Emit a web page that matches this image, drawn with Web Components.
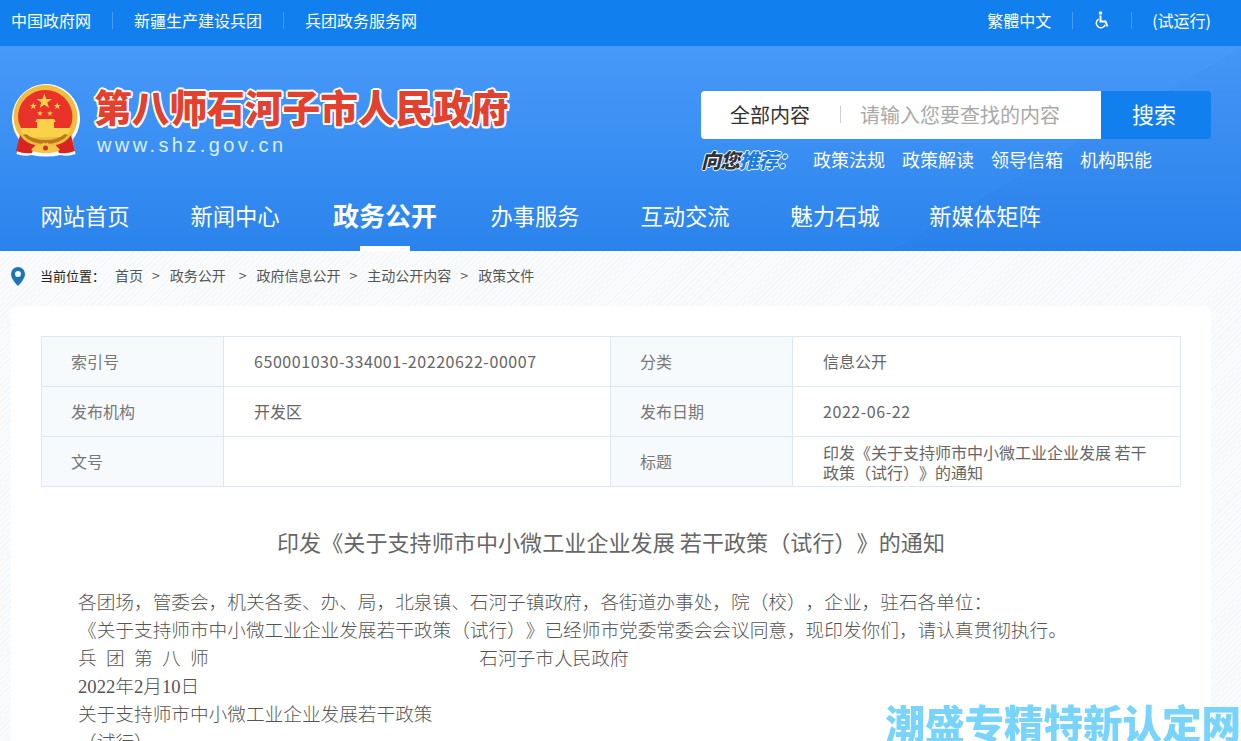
<!DOCTYPE html>
<html lang="zh-CN">
<head>
<meta charset="utf-8">
<title>第八师石河子市人民政府</title>
<style>
  html, body {
    margin: 0;
    height: 741px;
    overflow: hidden;
  }
  body {
    font-family: "Noto Sans CJK SC", "Liberation Sans", sans-serif;
    text-spacing-trim: space-all;
    background-color: #f8fafc;
    background-image: repeating-linear-gradient(135deg, #f4f7fa 0 1px, #fafbfd 1px 4px);
  }
</style>
</head>
<body>
<site-topbar></site-topbar>
<site-header></site-header>
<site-crumbs></site-crumbs>
<article-panel>
  <meta-table></meta-table>
  <policy-doc></policy-doc>
</article-panel>
<site-watermark></site-watermark>

<script>
const cjk = `"Noto Sans CJK SC", "Liberation Sans", sans-serif`;

class SiteTopbar extends HTMLElement {
  constructor() {
    super();
    this.attachShadow({ mode: "open" }).innerHTML = `
      <style>
        :host {
          display: flex;
          justify-content: space-between;
          align-items: center;
          height: 46px;
          background-color: #117fee;
          color: #fff;
          font-family: ${cjk};
          font-size: 16px;
          padding: 0 30px 6px 11px;
          box-sizing: border-box;
        }
        .group { display: flex; align-items: center; }
        .sep { width: 1px; height: 17px; background-color: #4b9df2; margin: 0 21px; }
        .sep.last { margin-right: 20px; }
        svg { display: block; }
      </style>
      <div class="group">
        <span>中国政府网</span><i class="sep"></i>
        <span>新疆生产建设兵团</span><i class="sep"></i>
        <span>兵团政务服务网</span>
      </div>
      <div class="group">
        <span>繁體中文</span><i class="sep"></i>
        <svg width="16" height="18" viewBox="0 0 16 18" fill="none" stroke="#fff">
          <circle cx="6.5" cy="2" r="1.8" fill="#fff" stroke="none"/>
          <path d="M6.5 4.5v6h5l2 5" stroke-width="2"/>
          <path d="M4.6 8.2a4.6 4.6 0 1 0 6.6 5.6" stroke-width="1.5"/>
        </svg>
        <i class="sep last"></i>
        <span>(试运行)</span>
      </div>`;
  }
}
customElements.define("site-topbar", SiteTopbar);

class NationalEmblem extends HTMLElement {
  constructor() {
    super();
    this.attachShadow({ mode: "open" }).innerHTML = `
      <style>:host { display: block; width: 70px; height: 74px; } svg { display: block; }</style>
      <svg width="70" height="74" viewBox="0 0 70 74">
        <path d="M34.500 0a34.500 34.500 0 0 1 27 56l3 14q-8 3-15 1-14 3-29 0-7 2-15-1l3-14a34.500 34.500 0 0 1 26-56Z" fill="#fff"/>
        <circle cx="34.500" cy="33" r="32" fill="#f2bd3e"/>
        <path d="M34.500 6a27 27 0 0 1 27 27q0 6-3 11H10q-3-5-3-11A27 27 0 0 1 34.500 6Z" fill="#e8322a"/>
        <g fill="#f8d34a">
          <polygon points="33.300,9.500 35.200,15 41,15 36.300,18.500 38,24 33.300,20.700 28.600,24 30.300,18.500 25.600,15 31.400,15"/>
          <polygon points="22.300,18.500 23.200,21 25.800,21 23.700,22.600 24.500,25.200 22.300,23.600 20.100,25.200 20.900,22.600 18.800,21 21.400,21"/>
          <polygon points="46.300,18.500 47.200,21 49.800,21 47.700,22.600 48.500,25.200 46.300,23.600 44.100,25.200 44.900,22.600 42.800,21 45.400,21"/>
          <polygon points="29,26.500 29.700,28.600 31.900,28.600 30.100,29.900 30.800,32 29,30.700 27.200,32 27.900,29.900 26.100,28.600 28.300,28.600"/>
          <polygon points="39,26.500 39.700,28.600 41.900,28.600 40.100,29.900 40.800,32 39,30.700 37.200,32 37.900,29.900 36.100,28.600 38.300,28.600"/>
          <path d="M26 35h17l2 3H24z"/>
          <rect x="26" y="38" width="17" height="6"/>
          <path d="M9 44h51q-2 6-6 9H15q-4-3-6-9Z"/>
        </g>
        <path d="M9 51 Q14 59 24 61 L21 69 Q13 70 5 67Z M60 51 Q55 59 45 61 L48 69 Q56 70 64 67Z" fill="#d8231f"/>
        <path d="M12 51 Q20 60 34.500 60 Q49 60 57 51 L54 50 Q46 56 34.500 56 Q23 56 15 50Z" fill="#b9771f"/>
        <path d="M20 66 Q24 60 30 62 Q33 56 34.500 60 Q36 56 39 62 Q45 60 49 66 Q42 70 34.500 69 Q27 70 20 66Z" fill="#f6c544"/>
        <circle cx="34.500" cy="64" r="2.500" fill="#c9352a"/>
      </svg>`;
  }
}
customElements.define("national-emblem", NationalEmblem);

class SearchBox extends HTMLElement {
  constructor() {
    super();
    this.attachShadow({ mode: "open" }).innerHTML = `
      <style>
        :host { display: flex; width: 510px; height: 48px; font-family: ${cjk}; font-size: 20px; }
        .field {
          flex: 0 0 400px;
          display: flex;
          align-items: center;
          background-color: #fff;
          border-radius: 4px 0 0 4px;
          color: #333;
          padding: 0 0 2px 29px;
          box-sizing: border-box;
        }
        .sep { width: 1px; height: 17px; background-color: #ccc; margin: 0 19px 0 30px; }
        .hint { color: #a9a9a9; }
        button {
          flex: 1;
          border: none;
          padding: 0 4px 5px 0;
          background-color: #117fee;
          border-radius: 0 4px 4px 0;
          color: #fff;
          font: inherit;
          font-size: 22px;
        }
      </style>
      <div class="field"><span>全部内容</span><i class="sep"></i><span class="hint">请输入您要查找的内容</span></div>
      <button>搜索</button>`;
  }
}
customElements.define("search-box", SearchBox);

class SiteHeader extends HTMLElement {
  constructor() {
    super();
    const navItems = ["网站首页", "新闻中心", "政务公开", "办事服务", "互动交流", "魅力石城", "新媒体矩阵"];
    this.attachShadow({ mode: "open" }).innerHTML = `
      <style>
        :host {
          display: block;
          height: 205px;
          overflow: hidden;
          color: #fff;
          font-family: ${cjk};
          background:
            linear-gradient(150deg, transparent 0 78%, rgba(0,70,190,.04) 78%),
            linear-gradient(180deg, #4799f8 0%, #3b90f3 45%, #2a83ec 100%);
        }
        .masthead {
          display: flex;
          justify-content: space-between;
          height: 140px;
          padding: 38px 30px 0 11px;
          box-sizing: border-box;
        }
        .brand { display: flex; gap: 13px; }
        .names { margin-top: -3px; }
        .title {
          font-weight: 900;
          font-size: 37.7px;
          line-height: 50px;
          color: #e3412f;
          text-shadow: 2px 0 0 #fff, -2px 0 0 #fff, 0 2px 0 #fff, 0 -2px 0 #fff,
            1.5px 1.5px 0 #fff, -1.5px 1.5px 0 #fff, 1.5px -1.5px 0 #fff, -1.5px -1.5px 0 #fff;
          white-space: nowrap;
        }
        .site {
          font-family: "Liberation Sans", sans-serif;
          font-size: 20px;
          line-height: 24px;
          letter-spacing: 3.4px;
          color: #d9efff;
          margin: 2px 0 0 3px;
        }
        .finder { padding-top: 7px; }
        .hot { display: flex; align-items: center; height: 24px; margin-top: 8px; font-size: 18px; }
        .hot-label {
          flex: 0 0 112px;
          font-size: 20px;
          font-weight: 900;
          font-style: italic;
          white-space: nowrap;
          letter-spacing: -1px;
        }
        .hot-label b, .hot-label em, .hot-label span {
          font-weight: 900;
          font-style: inherit;
          text-shadow: 1px 0 0 #fff, -1px 0 0 #fff, 0 1px 0 #fff, 0 -1px 0 #fff;
        }
        .hot-label b { color: #2d3340; }
        .hot-label em { color: #1a7be0; }
        .hot-label span { color: #2a83ec; }
        .hot a { margin-right: 17px; }
        nav { display: flex; height: 65px; padding-left: 10px; font-size: 22.3px; }
        nav a {
          flex: 0 0 150px;
          display: flex;
          justify-content: center;
          padding-top: 11px;
          box-sizing: border-box;
          position: relative;
          line-height: 36px;
        }
        nav a.on { font-size: 26px; font-weight: 700; }
        nav a.on::after {
          content: "";
          position: absolute;
          left: 50%;
          bottom: 0;
          width: 50px;
          margin-left: -25px;
          height: 5px;
          background-color: #fff;
        }
      </style>
      <div class="masthead">
        <div class="brand">
          <national-emblem></national-emblem>
          <div class="names">
            <div class="title">第八师石河子市人民政府</div>
            <div class="site">www.shz.gov.cn</div>
          </div>
        </div>
        <div class="finder">
          <search-box></search-box>
          <div class="hot">
            <span class="hot-label"><b>向您</b><em>推荐</em><span>&#xFF1A;</span></span>
            <a>政策法规</a><a>政策解读</a><a>领导信箱</a><a>机构职能</a>
          </div>
        </div>
      </div>
      <nav>${navItems.map((t, i) => `<a class="${i === 2 ? "on" : ""}">${t}</a>`).join("")}</nav>`;
  }
}
customElements.define("site-header", SiteHeader);

class SiteCrumbs extends HTMLElement {
  constructor() {
    super();
    this.attachShadow({ mode: "open" }).innerHTML = `
      <style>
        :host {
          display: flex;
          align-items: center;
          height: 55px;
          padding: 0 0 7px 11px;
          box-sizing: border-box;
          font-family: ${cjk};
          font-size: 14px;
          color: #555;
        }
        svg { display: block; margin: 2px 15px 0 0; }
        b { flex: 0 0 63px; font-size: 13px; font-weight: 400; color: #222; margin-right: 10px; white-space: nowrap; }
        i { font-style: normal; margin: 0 10px 0 9px; }
      </style>
      <svg width="14" height="19" viewBox="0 0 14 19">
        <path fill-rule="evenodd" fill="#1c75b4" d="M7 0a7 7 0 0 1 7 7c0 4.400-4.500 9.500-7 12C4.500 16.500 0 11.400 0 7a7 7 0 0 1 7-7Zm0 4a3 3 0 1 0 0 6 3 3 0 0 0 0-6Z"/>
      </svg>
      <b>当前位置&#xFF1A;</b><span>首页</span><i>&gt;</i><span>政务公开</span><i style="margin-left:13px">&gt;</i><span>政府信息公开</span><i>&gt;</i><span>主动公开内容</span><i>&gt;</i><span>政策文件</span>`;
  }
}
customElements.define("site-crumbs", SiteCrumbs);

class ArticlePanel extends HTMLElement {
  constructor() {
    super();
    this.attachShadow({ mode: "open" }).innerHTML = `
      <style>
        :host {
          display: block;
          margin: 0 30px 0 11px;
          padding: 30px 30px 0;
          height: 436px;
          box-sizing: border-box;
          background-color: #fff;
          border-radius: 6px 6px 0 0;
          overflow: hidden;
        }
      </style>
      <slot></slot>`;
  }
}
customElements.define("article-panel", ArticlePanel);

class MetaTable extends HTMLElement {
  constructor() {
    super();
    const rows = [
      ["索引号", `<span class="num">650001030-334001-20220622-00007</span>`, "分类", "信息公开"],
      ["发布机构", "开发区", "发布日期", `<span class="num">2022-06-22</span>`],
      ["文号", "", "标题", "印发《关于支持师市中小微工业企业发展 若干政策&#xFF08;试行&#xFF09;》的通知"],
    ];
    this.attachShadow({ mode: "open" }).innerHTML = `
      <style>
        :host {
          display: grid;
          grid-template-columns: 182px 387px 182px 1fr;
          grid-auto-rows: 50px;
          height: 151px;
          box-sizing: border-box;
          border-top: 1px solid #dce8f4;
          border-left: 1px solid #dce8f4;
          font-family: ${cjk};
          font-size: 16px;
          color: #666;
          text-spacing-trim: space-all;
        }
        div {
          display: flex;
          align-items: center;
          border-right: 1px solid #dce8f4;
          border-bottom: 1px solid #dce8f4;
          padding: 0 30px 2px;
        }
        .k { background-color: #f7fafd; padding-left: 29px; color: #777; }
        .num { letter-spacing: 0.56px; }
        .long { line-height: 20px; padding: 0 30px; }
      </style>
      ${rows.map(r => `
        <div class="k">${r[0]}</div><div>${r[1]}</div>
        <div class="k">${r[2]}</div><div class="${r[3].includes("通知") ? "long" : ""}">${r[3]}</div>`).join("")}`;
  }
}
customElements.define("meta-table", MetaTable);

class PolicyDoc extends HTMLElement {
  constructor() {
    super();
    this.attachShadow({ mode: "open" }).innerHTML = `
      <style>
        :host { display: block; font-family: ${cjk}; color: #555; text-spacing-trim: space-all; }
        h1 {
          margin: 36px 0 0;
          font-size: 22px;
          font-weight: 400;
          line-height: 36px;
          letter-spacing: 0.1px;
          text-align: center;
          color: #666;
        }
        .body {
          margin: 30px 0 0 37px;
          font-family: "Liberation Serif", "Noto Sans CJK SC", serif;
          font-weight: 300;
          font-size: 18.67px;
          line-height: 28px;
          word-spacing: 4.67px;
        }
        .body div { white-space: pre; height: 28px; }
      </style>
      <h1>印发《关于支持师市中小微工业企业发展 若干政策&#xFF08;试行&#xFF09;》的通知</h1>
      <div class="body">
        <div>各团场&#xFF0C;管委会&#xFF0C;机关各委、办、局&#xFF0C;北泉镇、石河子镇政府&#xFF0C;各街道办事处&#xFF0C;院&#xFF08;校&#xFF09;&#xFF0C;企业&#xFF0C;驻石各单位&#xFF1A;</div>
        <div>《关于支持师市中小微工业企业发展若干政策&#xFF08;试行&#xFF09;》已经师市党委常委会会议同意&#xFF0C;现印发你们&#xFF0C;请认真贯彻执行。</div>
        <div>兵 团 第 八 师                             石河子市人民政府</div>
        <div>2022年2月10日</div>
        <div>关于支持师市中小微工业企业发展若干政策</div>
        <div>&#xFF08;试行&#xFF09;</div>
      </div>`;
  }
}
customElements.define("policy-doc", PolicyDoc);

class SiteWatermark extends HTMLElement {
  constructor() {
    super();
    this.attachShadow({ mode: "open" }).innerHTML = `
      <style>
        :host {
          position: fixed;
          right: 0;
          bottom: -6px;
          font-family: ${cjk};
          font-size: 39.5px;
          font-weight: 900;
          line-height: 50px;
          color: #78d4fb;
          white-space: nowrap;
        }
      </style>
      潮盛专精特新认定网`;
  }
}
customElements.define("site-watermark", SiteWatermark);
</script>
</body>
</html>
